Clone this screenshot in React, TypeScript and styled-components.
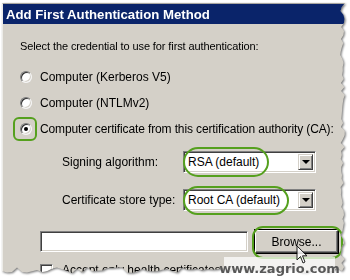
import React from "react";
import styled, { createGlobalStyle } from "styled-components";

// torn paper edge along the right and bottom of the capture
const W = 344;
const H = 271;
const tornEdge = (() => {
  let seed = 11;
  const rnd = () => {
    seed = (seed * 9301 + 49297) % 233280;
    return seed / 233280;
  };
  const pts: string[] = ["0px 0px", `${W - 1}px 0px`];
  for (let y = 4; y < H - 6; y += 4) {
    pts.push(`${(W - 1 - rnd() * 5).toFixed(1)}px ${y}px`);
  }
  for (let x = W - 4; x > 0; x -= 5) {
    pts.push(`${x}px ${(H - 1 - rnd() * 6).toFixed(1)}px`);
  }
  pts.push(`0px ${H - 3}px`);
  return `polygon(${pts.join(", ")})`;
})();

const GlobalStyle = createGlobalStyle`
  html, body {
    margin: 0;
    padding: 0;
    width: 350px;
    height: 280px;
    overflow: hidden;
    background: #ffffff;
  }
  body {
    font-family: "Liberation Sans", Arial, sans-serif;
  }
`;

const Page = styled.div`
  position: relative;
  width: 350px;
  height: 280px;
  padding: 3px 0 0 2px;
  box-sizing: border-box;
`;

const Shadow = styled.div`
  width: ${W}px;
  filter: drop-shadow(1px 1px 1.2px rgba(0, 0, 0, 0.55));
`;

const Dialog = styled.div`
  width: ${W}px;
  height: ${H}px;
  box-sizing: border-box;
  background: #d4d0c8;
  border-top: 1px solid #a9a6a0;
  border-left: 1px solid #ecebe7;
  clip-path: ${tornEdge};
  display: flex;
  flex-direction: column;
`;

const TitleBar = styled.div`
  height: 20px;
  flex: none;
  background: #0a246a;
  color: #ffffff;
  font-weight: bold;
  font-size: 13.2px;
  padding-left: 3px;
  display: flex;
  align-items: center;
`;

const Body = styled.div`
  padding: 15px 0 0 17px;
  font-size: 12px;
  color: #000000;
`;

const Prompt = styled.div`
  height: 14px;
  line-height: 14px;
  font-size: 11px;
  letter-spacing: -0.1px;
`;

const RadioList = styled.div`
  margin-top: 11px;
  display: flex;
  flex-direction: column;
`;

const RadioRow = styled.div<{ $tight?: boolean }>`
  height: 26px;
  display: flex;
  align-items: center;
  gap: 8px;
  letter-spacing: ${(p) => (p.$tight ? "-0.13px" : "normal")};
`;

const RadioWrap = styled.span`
  position: relative;
  display: inline-flex;
`;

const Radio = styled.span<{ $checked?: boolean }>`
  position: relative;
  width: 12px;
  height: 12px;
  box-sizing: border-box;
  border-radius: 50%;
  background: #ffffff;
  border: 1px solid;
  border-color: #7a7a7a #f4f4f4 #f4f4f4 #7a7a7a;
  box-shadow: inset 1px 1px 0 #303030, inset -1px -1px 0 #d4d0c8;
  &::after {
    content: "";
    display: ${(p) => (p.$checked ? "block" : "none")};
    position: absolute;
    left: 3px;
    top: 3px;
    width: 4px;
    height: 4px;
    border-radius: 50%;
    background: #000000;
  }
`;

const Highlight = styled.span<{
  $l: number;
  $t: number;
  $w: number;
  $h: number;
  $r: string;
}>`
  position: absolute;
  left: ${(p) => p.$l}px;
  top: ${(p) => p.$t}px;
  width: ${(p) => p.$w}px;
  height: ${(p) => p.$h}px;
  box-sizing: border-box;
  border: 2px solid #55a01e;
  border-radius: ${(p) => p.$r};
  pointer-events: none;
`;

const FieldGrid = styled.div`
  margin-top: 9px;
  margin-left: 42px;
  display: grid;
  grid-template-columns: 121px 133px;
  row-gap: 16px;
  align-items: center;
`;

const Select = styled.div`
  position: relative;
  height: 22px;
  box-sizing: border-box;
  background: #ffffff;
  border: 1px solid;
  border-color: #808080 #ffffff #ffffff #808080;
  box-shadow: inset 1px 1px 0 #404040, inset -1px -1px 0 #d4d0c8;
  display: flex;
  align-items: center;
  padding: 2px 2px 2px 4px;
`;

const SelectText = styled.span`
  flex: 1;
`;

const ArrowButton = styled.span`
  width: 15px;
  height: 16px;
  box-sizing: border-box;
  background: #d4d0c8;
  border: 1px solid;
  border-color: #d4d0c8 #404040 #404040 #d4d0c8;
  box-shadow: inset 1px 1px 0 #ffffff, inset -1px -1px 0 #808080;
  display: flex;
  align-items: center;
  justify-content: center;
  &::after {
    content: "";
    border-left: 4px solid transparent;
    border-right: 4px solid transparent;
    border-top: 4px solid #000000;
  }
`;

const BrowseRow = styled.div`
  margin-top: 19px;
  margin-left: 20px;
  display: flex;
  align-items: center;
  gap: 7px;
`;

const TextBox = styled.div`
  width: 208px;
  height: 21px;
  box-sizing: border-box;
  background: #ffffff;
  border: 1px solid;
  border-color: #808080 #ffffff #ffffff #808080;
  box-shadow: inset 1px 1px 0 #404040, inset -1px -1px 0 #d4d0c8;
`;

const Button = styled.div`
  position: relative;
  width: 83px;
  height: 23px;
  box-sizing: border-box;
  background: #d4d0c8;
  border: 1px solid;
  border-color: #ffffff #404040 #404040 #ffffff;
  box-shadow: inset -1px -1px 0 #808080, 0 0 0 1px #000000;
  display: flex;
  align-items: center;
  justify-content: center;
`;

const CheckRow = styled.div`
  margin-top: 10px;
  margin-left: 20px;
  display: flex;
  align-items: center;
  gap: 9px;
`;

const CheckBox = styled.span`
  width: 13px;
  height: 13px;
  box-sizing: border-box;
  background: #ffffff;
  border: 1px solid;
  border-color: #808080 #ffffff #ffffff #808080;
  box-shadow: inset 1px 1px 0 #404040, inset -1px -1px 0 #d4d0c8;
`;

const Watermark = styled.div`
  position: absolute;
  left: 224px;
  top: 257px;
  width: 111px;
  height: 23px;
  background: rgba(255, 255, 255, 0.72);
  color: #585858;
  font-family: "DejaVu Sans", Verdana, sans-serif;
  font-weight: bold;
  font-size: 13px;
  display: flex;
  align-items: center;
  justify-content: center;
`;

const Cursor = styled.svg`
  position: absolute;
  left: 296px;
  top: 245px;
  opacity: 0.85;
`;

export default function App() {
  return (
    <Page>
      <GlobalStyle />
      <Shadow>
        <Dialog>
          <TitleBar>Add First Authentication Method</TitleBar>
          <Body>
            <Prompt>Select the credential to use for first authentication:</Prompt>
            <RadioList>
              <RadioRow>
                <RadioWrap>
                  <Radio />
                </RadioWrap>
                Computer (Kerberos V5)
              </RadioRow>
              <RadioRow>
                <RadioWrap>
                  <Radio />
                </RadioWrap>
                Computer (NTLMv2)
              </RadioRow>
              <RadioRow $tight>
                <RadioWrap>
                  <Radio $checked />
                  <Highlight $l={-7} $t={-6} $w={24} $h={24} $r="6px" />
                </RadioWrap>
                Computer certificate from this certification authority (CA):
              </RadioRow>
            </RadioList>
            <FieldGrid>
              <span>Signing algorithm:</span>
              <Select>
                <SelectText>RSA (default)</SelectText>
                <ArrowButton />
                <Highlight $l={-1} $t={-5} $w={86} $h={30} $r="16px" />
              </Select>
              <span>Certificate store type:</span>
              <Select>
                <SelectText>Root CA (default)</SelectText>
                <ArrowButton />
                <Highlight $l={-1} $t={-4} $w={106} $h={29} $r="15px" />
              </Select>
            </FieldGrid>
            <BrowseRow>
              <TextBox />
              <Button>
                Browse...
                <Highlight $l={-4} $t={-5} $w={91} $h={33} $r="11px" />
              </Button>
            </BrowseRow>
            <CheckRow>
              <CheckBox />
              Accept only health certificates
            </CheckRow>
          </Body>
        </Dialog>
      </Shadow>
      <Watermark>www.zagrio.com</Watermark>
      <Cursor width="13" height="20" viewBox="0 0 13 20">
        <path
          d="M1 1 L1 15 L4.5 11.5 L7 18 L9 17 L6.5 10.8 L11 10.8 Z"
          fill="#ffffff"
          stroke="#000000"
          strokeWidth="1"
          strokeLinejoin="round"
        />
      </Cursor>
    </Page>
  );
}
